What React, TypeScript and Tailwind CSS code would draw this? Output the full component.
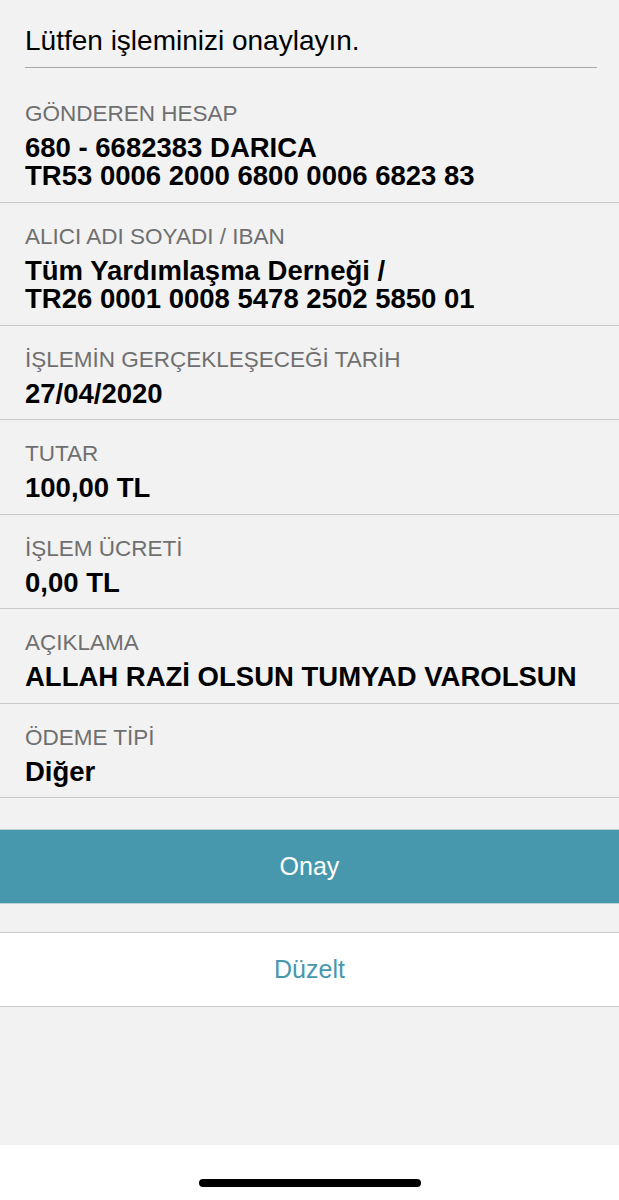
const rows: { label: string; value: string[]; pb: string }[] = [
  { label: "GÖNDEREN HESAP", value: ["680 - 6682383 DARICA", "TR53 0006 2000 6800 0006 6823 83"], pb: "pb-[12px]" },
  { label: "ALICI ADI SOYADI / IBAN", value: ["Tüm Yardımlaşma Derneği /", "TR26 0001 0008 5478 2502 5850 01"], pb: "pb-[12px]" },
  { label: "İŞLEMİN GERÇEKLEŞECEĞİ TARİH", value: ["27/04/2020"], pb: "pb-[11px]" },
  { label: "TUTAR", value: ["100,00 TL"], pb: "pb-[12px]" },
  { label: "İŞLEM ÜCRETİ", value: ["0,00 TL"], pb: "pb-[11px]" },
  { label: "AÇIKLAMA", value: ["ALLAH RAZİ OLSUN TUMYAD VAROLSUN"], pb: "pb-[12px]" },
  { label: "ÖDEME TİPİ", value: ["Diğer"], pb: "pb-[11px]" },
];

export default function App() {
  return (
    <div className="flex h-[1200px] w-[619px] flex-col bg-[#f2f2f2] font-['Liberation_Sans',Arial,sans-serif]">
      {/* Başlık */}
      <div className="ml-[25px] mr-[22px] border-b border-[#a9a9a9] pt-[26px] pb-[11px]">
        <p className="text-[28px] leading-[30px] text-black">Lütfen işleminizi onaylayın.</p>
      </div>

      {/* Detaylar */}
      <div className="mt-[12px]">
        {rows.map((row) => (
          <div key={row.label} className={`border-b border-[#c9c9c9] px-[25px] pt-[22px] ${row.pb}`}>
            <p className="text-[22.5px] leading-[24px] text-[#6f6f6f]">{row.label}</p>
            <div className="mt-[8px]">
              {row.value.map((line) => (
                <p key={line} className="text-[27.5px] leading-[28px] font-bold text-black">
                  {line}
                </p>
              ))}
            </div>
          </div>
        ))}
      </div>

      {/* Butonlar */}
      <button className="mt-[31px] h-[75px] w-full border-y border-[#bdd3da] bg-[#4797ad] text-[25px] text-white">
        Onay
      </button>
      <button className="mt-[28px] h-[75px] w-full border-y border-[#c9c9c9] bg-white text-[25px] text-[#4797ad]">
        Düzelt
      </button>

      <div className="flex-1" />

      {/* Home indicator */}
      <div className="flex h-[55px] justify-center bg-white pt-[34px]">
        <div className="h-[8px] w-[222px] rounded-full bg-black" />
      </div>
    </div>
  );
}
